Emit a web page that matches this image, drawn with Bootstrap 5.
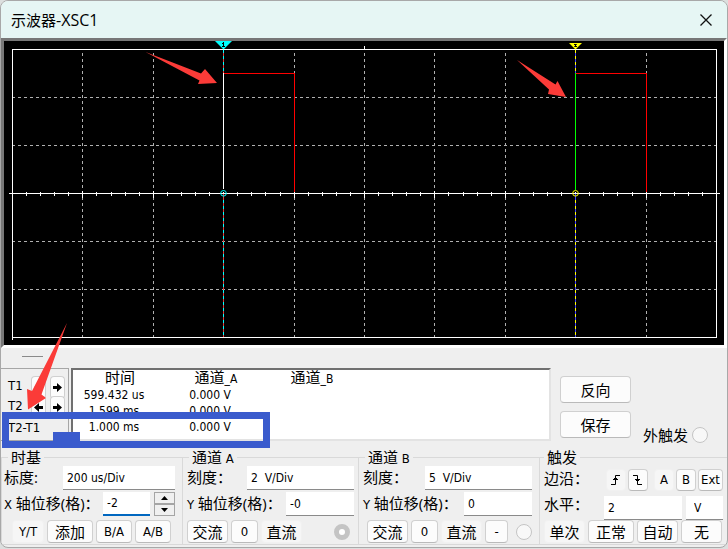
<!DOCTYPE html>
<html lang="zh-CN">
<head>
<meta charset="utf-8">
<meta name="viewport" content="width=device-width, initial-scale=1">
<title>示波器-XSC1</title>
<link href="https://cdn.jsdelivr.net/npm/bootstrap@5.3.0/dist/css/bootstrap.min.css" rel="stylesheet">
<style>
body{font-family:"DejaVu Sans Condensed","Open Sans","Noto Sans CJK SC",sans-serif;font-size:13px;line-height:16px;color:#000;background:#dcdfde}
.osc-window{background:#efefef;border:1px solid #a8a8a8;border-radius:8px;overflow:hidden}
.titlebar{background:#e6f6f4;height:37px;padding:0 13px 0 10px}
.titlebar h1{font-family:"Open Sans","Noto Sans CJK SC",sans-serif;font-size:15px;line-height:20px}
.cn{font-family:"Open Sans","Noto Sans CJK SC",sans-serif;font-size:15px}
.lat{font-size:16px}
.close-btn{width:16px;height:16px;line-height:0}
.scope{border:3px solid;border-color:#777 #fff #fff #777;background:#000}
.scope svg{display:block;width:100%;height:auto}
.grip-line{width:21px;height:1px;background:#8a8a8a;margin:8px 0 11px 21px}
.cursor-box{width:68px;height:73px;border:1px solid #a6a6a6;border-width:1px 1px 1px 0;padding:7px 3px 0 7px}
.cursor-line{height:20px}
.cursor-label{width:23px;line-height:20px}
.arrow-btn{width:15px;height:20px;margin-right:4px}
.diff-label{line-height:18px;padding-top:3px}
.reading-box{flex:0 0 480px;height:73px;background:#fff;border:2px solid #e3e3e3;border-top-color:#707070;border-left-color:#707070;margin-left:2px}
.reading-box table{table-layout:fixed;width:100%;font-size:12px}
.reading-box th,.reading-box td{height:16px;padding:0;text-align:center;font-weight:400;white-space:nowrap}
.reading-box td{padding-right:14px}
.reading-box th{line-height:15px;padding-right:2px}
.reading-box th:not(:last-child){width:96px}
.side-btns{width:71px;margin-left:9px;padding-top:8px}
.side-btns .tool{height:27px}
.ext{padding:59px 19px 0 0}
.tool{display:inline-flex;align-items:center;justify-content:center;padding:0;background:#fcfcfc;border:1px solid #d0d0d0;border-bottom-color:#bababa;border-radius:4px;color:#000;height:23px;line-height:20px;white-space:nowrap}
.tool.flat{background:#f6f6f6;border-color:#f1f1f1}
.hl-frame{position:absolute;left:1px;top:44px;width:268px;height:36px;border:7px solid #3a5bcd}
.hl-stub{position:absolute;left:52px;top:64px;width:27px;height:10px;background:#3a5bcd}
.hl-arrow{position:absolute;left:19px;top:-47px;width:50px;height:90px}
.groups{display:grid;grid-template-columns:181fr 176fr 181fr 188fr;margin-top:5px;padding-bottom:2px}
.groups fieldset{border:1px solid #d9d9d9;border-right:0;padding:0 7px 1px 4px;margin:0;min-width:0}
.groups fieldset:first-child{padding-left:2px}
.groups legend{float:none;width:auto;font-size:13px;line-height:18px;height:18px;margin:0 0 0 2px;padding:0 3px}
.line{height:24px;margin-bottom:2px;display:flex;align-items:center;justify-content:space-between;white-space:nowrap}
.btnline{display:flex;align-items:center;gap:3px;padding-top:2px}
.edge-btns{gap:2px}
.field{height:24px;background:#fff;border:0;border-bottom:1px solid #8a8a8a;border-radius:0;padding:0 4px;font-size:12px;color:#000;min-width:0;flex:none;outline:0}
.field.active{border-bottom:2px solid #0067c0}
.w112{width:112px}.w107{width:107px}.w78{width:78px}.w68{width:68px}.w47{width:47px}.w37{width:37px;padding-left:8px}
.b46{width:46px}.b41{width:41px}.b36{width:36px}.b31{width:32px}.b27{width:27px}.b22{width:23px}.b20{width:20px;height:22px}.b25{width:25px;height:22px}
.spin{width:21px;height:12px;padding:0;border:1px solid #a5a5a5;background:#f0f0f0;line-height:0}
.dot{appearance:none;width:16px;height:16px;border:1px solid #c4c4c4;border-radius:50%;background:#f8f8f8;margin:0;flex:none}
.dot:checked{border:5px solid #c4c4c4;background:#fff}
</style>
<script src="https://cdn.jsdelivr.net/npm/bootstrap@5.3.0/dist/js/bootstrap.bundle.min.js"></script>
</head>
<body>
<svg width="0" height="0" class="position-absolute" aria-hidden="true">
  <symbol id="arrow-right" viewBox="0 0 9 9"><path d="M0 3H4V0L9 4.5 4 9V6H0z"/></symbol>
  <symbol id="arrow-left" viewBox="0 0 9 9"><path d="M9 3H5V0L0 4.5 5 9V6H9z"/></symbol>
</svg>
<main class="osc-window">
  <header class="titlebar d-flex align-items-center justify-content-between">
    <h1 class="m-0 fw-normal">示波器<span class="lat">-XSC1</span></h1>
    <button type="button" class="close-btn btn p-0 border-0" aria-label="关闭"><svg width="16" height="16" viewBox="0 0 16 16"><path d="M2.5 2.5l11 11M13.5 2.5l-11 11" stroke="#111" stroke-width="1.3" fill="none"/></svg></button>
  </header>

  <section class="scope" aria-label="波形">
    <svg viewBox="4 41 720 304">
      <rect x="4" y="41" width="720" height="304"/>
      <g shape-rendering="crispEdges" fill="none">
        <path stroke="#b0b0b0" stroke-dasharray="3 3" d="M82.5 53V337M153.5 53V337M294.5 53V337M364.5 53V337M434.5 53V337M505.5 53V337M646.5 53V337M12 97.5H716M12 145.5H716M12 241.5H716M12 289.5H716"/>
        <path stroke="#fff" d="M12.5 340V49.5H716.5V337.5H12.5M9 193.5H720M364.5 46V49M82.5 191V198M153.5 191V198M294.5 191V198M364.5 191V198M434.5 191V198M505.5 191V198M646.5 191V198"/>
        <path stroke="#fff" stroke-width="4" stroke-dasharray="1 13.08" d="M12 194H717"/>
        <path stroke="#f00" d="M224 73.5H294.5V192M576 73.5H646.5V192"/>
        <path stroke="#e04040" d="M223.5 50V73M223.5 194V337"/>
        <path stroke="#0ff" stroke-dasharray="3 3" d="M223.5 50V73M223.5 200V337"/>
        <path stroke="#fff" d="M223.5 73V189"/>
        <path stroke="#44f" d="M575.5 50V73M575.5 194V337"/>
        <path stroke="#ff0" stroke-dasharray="3 3" d="M575.5 50V73M575.5 200V337"/>
        <path stroke="#0f0" d="M575.5 73V190"/>
      </g>
      <circle cx="223.5" cy="193.3" r="2.8" fill="none" stroke="#0ff"/>
      <circle cx="575.5" cy="193.3" r="2.8" fill="none" stroke="#ff0"/>
      <path fill="#0ff" d="M215 41H232L223.5 49.5z"/><path stroke="#000" d="M223.5 42V47M222 43.5H224M222 46.5H225"/>
      <path fill="#ff0" d="M569 43H582L575.5 49.5z"/><path stroke="#000" fill="none" d="M574 44.5H576.5L574.5 46.5H577"/>
      <g fill="#fb3b38"><path d="M145.5 52L201 73.5 205 69 217 83 198 84 199.5 80.500z"/><path d="M517 60L555.5 84.5 557.5 81 566 97 548 94 549 89.5z"/></g>
    </svg>
  </section>

  <div class="grip-line"></div>

  <section class="position-relative d-flex align-items-start">
    <div class="cursor-box flex-shrink-0">
      <div class="d-flex cursor-line"><span class="cursor-label">T1</span>
        <button type="button" class="tool arrow-btn" aria-label="T1 左移"><svg width="9" height="9"><use href="#arrow-left"/></svg></button>
        <button type="button" class="tool arrow-btn me-0" aria-label="T1 右移"><svg width="9" height="9"><use href="#arrow-right"/></svg></button></div>
      <div class="d-flex cursor-line"><span class="cursor-label">T2</span>
        <button type="button" class="tool arrow-btn" aria-label="T2 左移"><svg width="9" height="9"><use href="#arrow-left"/></svg></button>
        <button type="button" class="tool arrow-btn me-0" aria-label="T2 右移"><svg width="9" height="9"><use href="#arrow-right"/></svg></button></div>
      <div class="diff-label">T2-T1</div>
    </div>
    <div class="reading-box">
      <table>
        <thead><tr><th scope="col"><span class="cn">时间</span></th><th scope="col"><span class="cn">通道</span>_A</th><th scope="col"><span class="cn">通道</span>_B</th><th></th></tr></thead>
        <tbody>
          <tr><td>599.432 us</td><td>0.000 V</td><td></td><td></td></tr>
          <tr><td>1.599 ms</td><td>0.000 V</td><td></td><td></td></tr>
          <tr><td>1.000 ms</td><td>0.000 V</td><td></td><td></td></tr>
        </tbody>
      </table>
    </div>
    <div class="side-btns d-flex flex-column gap-2 flex-shrink-0">
      <button type="button" class="tool cn">反向</button>
      <button type="button" class="tool cn">保存</button>
    </div>
    <div class="ext ms-auto d-flex align-items-center text-nowrap">
      <label class="cn me-1" for="extTrig">外触发</label><input class="dot" type="radio" name="ext" id="extTrig">
    </div>
    <div class="hl-frame"></div><div class="hl-stub"></div>
    <svg class="hl-arrow" viewBox="20 321 50 90" aria-hidden="true"><path fill="#fb3b38" d="M67 323L41.5 394.5 46 398 28 409.5 27 389 32 391z"/></svg>
  </section>

  <form class="groups">
    <fieldset>
      <legend class="ms-1"><span class="cn">时基</span></legend>
      <div class="line"><label for="tb"><span class="cn">标度:</span></label><input id="tb" class="field w112" value="200 us/Div"></div>
      <div class="line"><label for="xp">X <span class="cn">轴位移(格)：</span></label>
        <div class="d-flex"><input id="xp" class="field w47 active" value="-2"><div class="d-flex flex-column ms-1">
          <button type="button" class="spin" aria-label="增加"><svg width="7" height="4"><path d="M0 4L3.5 0 7 4z"/></svg></button>
          <button type="button" class="spin" aria-label="减少"><svg width="7" height="4"><path d="M0 0L3.5 4 7 0z"/></svg></button></div></div></div>
      <div class="btnline ps-2"><button type="button" class="tool flat b31">Y/T</button><button type="button" class="tool cn b46">添加</button><button type="button" class="tool b36">B/A</button><button type="button" class="tool b36">A/B</button></div>
    </fieldset>
    <fieldset class="pe-1">
      <legend><span class="cn">通道</span> A</legend>
      <div class="line"><label for="as"><span class="cn">刻度：</span></label><input id="as" class="field w107" value="2  V/Div"></div>
      <div class="line"><label for="ay">Y <span class="cn">轴位移(格)：</span></label><input id="ay" class="field w68" value="-0"></div>
      <div class="btnline"><button type="button" class="tool cn b41">交流</button><button type="button" class="tool b27">0</button><button type="button" class="tool cn flat b41">直流</button><input class="dot ms-auto me-1" type="radio" name="cha" aria-label="通道 A" checked></div>
    </fieldset>
    <fieldset>
      <legend><span class="cn">通道</span> B</legend>
      <div class="line"><label for="bs"><span class="cn">刻度：</span></label><input id="bs" class="field w107" value="5  V/Div"></div>
      <div class="line"><label for="by">Y <span class="cn">轴位移(格)：</span></label><input id="by" class="field w68" value="0"></div>
      <div class="btnline ps-1"><button type="button" class="tool cn b41">交流</button><button type="button" class="tool b27">0</button><button type="button" class="tool cn flat b41">直流</button><button type="button" class="tool b22">-</button><input class="dot ms-auto" type="radio" name="chb" aria-label="通道 B"></div>
    </fieldset>
    <fieldset class="pe-1">
      <legend class="ms-0"><span class="cn">触发</span></legend>
      <div class="line"><span class="cn">边沿：</span>
        <div class="d-flex align-items-center edge-btns pt-1">
          <button type="button" class="tool flat b20" aria-label="上升沿"><svg width="10" height="12" fill="none" stroke="#000"><path d="M0 10.5H4.5V1.5H9M2 5.5H7M3 4.5H6"/></svg></button>
          <button type="button" class="tool b20 me-1" aria-label="下降沿"><svg width="10" height="12" fill="none" stroke="#000"><path d="M0 1.5H4.5V10.5H9M2 5.5H7M3 6.5H6"/></svg></button>
          <button type="button" class="tool flat b20">A</button><button type="button" class="tool b20">B</button><button type="button" class="tool b25">Ext</button>
        </div></div>
      <div class="line"><label for="lv" class="cn">水平：</label><div class="d-flex pt-2"><input id="lv" class="field w78 me-1" value="2"><input class="field w37" value="V" aria-label="单位"></div></div>
      <div class="btnline"><button type="button" class="tool cn flat b41">单次</button><button type="button" class="tool cn b46">正常</button><button type="button" class="tool cn b41">自动</button><button type="button" class="tool cn b41">无</button></div>
    </fieldset>
  </form>
</main>
</body>
</html>
